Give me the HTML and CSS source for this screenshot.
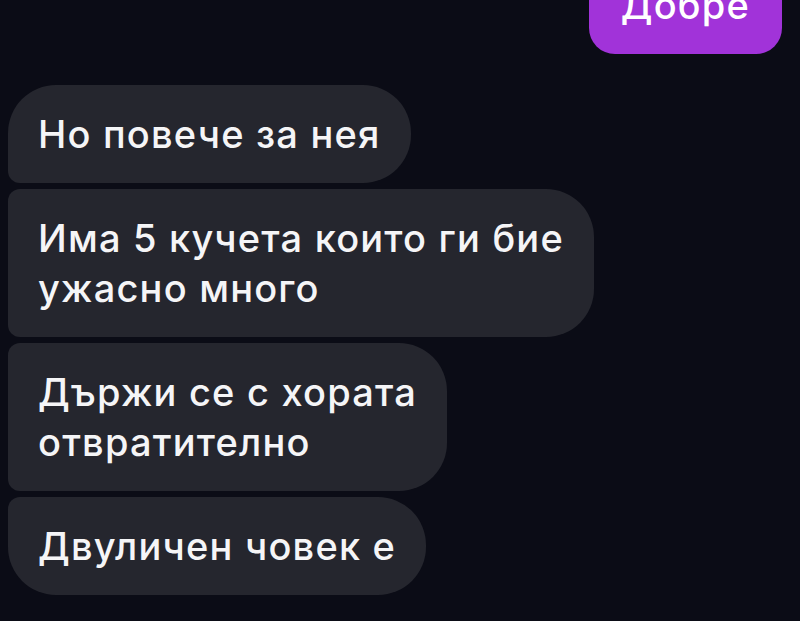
FILE: index.html
```html
<!DOCTYPE html>
<html lang="bg">
<head>
    <meta charset="UTF-8">
    <meta name="viewport" content="width=device-width, initial-scale=1.0">
    <title>Чат</title>
    <link rel="stylesheet" href="styles.css">
</head>
<body>
    <main class="chat">
        <div class="row row-out">
            <div class="bubble bubble-out">Добре</div>
        </div>

        <div class="group">
            <div class="row">
                <div class="bubble bubble-in first">Но повече за нея</div>
            </div>
            <div class="row">
                <div class="bubble bubble-in middle">Има 5 кучета които ги бие<br>ужасно много</div>
            </div>
            <div class="row">
                <div class="bubble bubble-in middle">Държи се с хората<br>отвратително</div>
            </div>
            <div class="row">
                <div class="bubble bubble-in last">Двуличен човек е</div>
            </div>
        </div>
    </main>
</body>
</html>
```
FILE: styles.css
```css
html, body {
    margin: 0;
    padding: 0;
    height: 100%;
}

body {
    background-color: #0b0c16;
    font-family: Inter, Roboto, "Noto Sans", sans-serif;
    color: #f5f5f7;
    overflow: hidden;
}

.chat {
    display: flex;
    flex-direction: column;
    gap: 31px;
    margin-top: -44px;
    padding: 0 18px 0 8px;
}

.group {
    display: flex;
    flex-direction: column;
    gap: 6px;
}

.row {
    display: flex;
}

.row-out {
    justify-content: flex-end;
}

.bubble {
    font-size: 38px;
    font-weight: 500;
    line-height: 50px;
    letter-spacing: 1.2px;
    padding: 24px 30px;
    white-space: nowrap;
}

.bubble-out {
    background-color: #a133d9;
    color: #fff;
    border-radius: 26px;
    padding: 24px 32px;
}

.bubble-in {
    background-color: #25262e;
}

.first {
    border-radius: 48px 48px 48px 12px;
}

.middle {
    border-radius: 12px 48px 48px 12px;
}

.last {
    border-radius: 12px 48px 48px 48px;
}
```
